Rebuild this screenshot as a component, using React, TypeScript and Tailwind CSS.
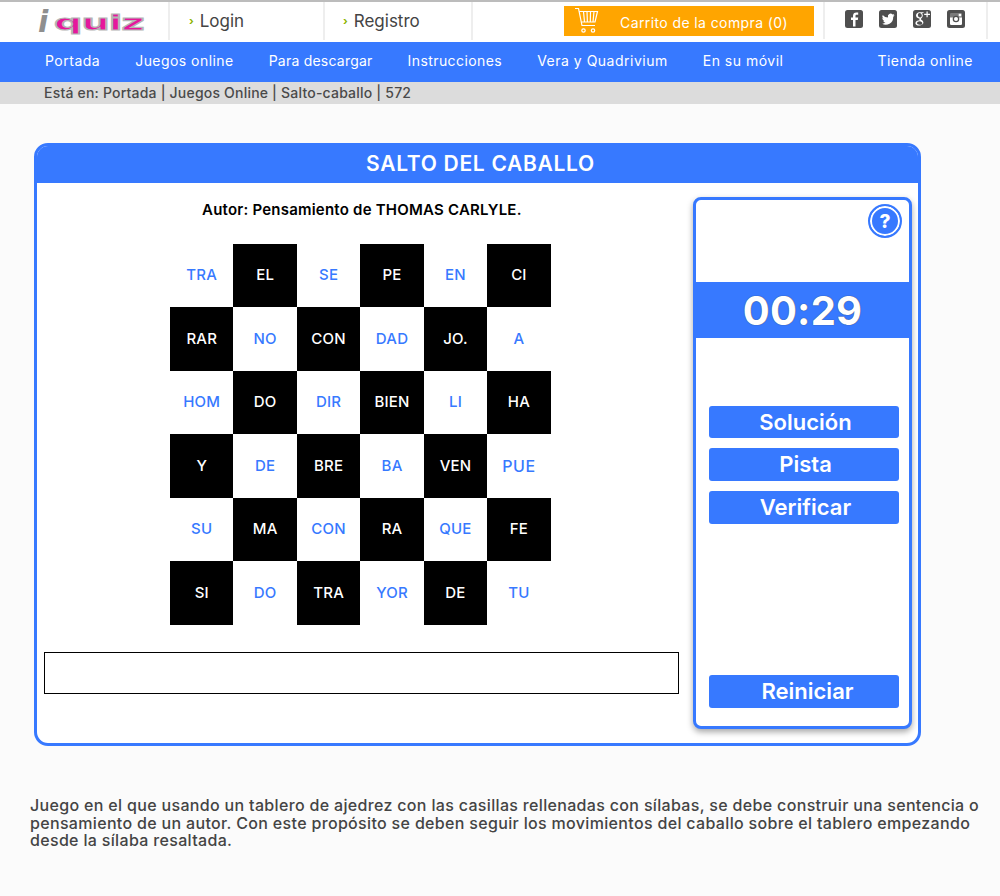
const rows = [
  ["TRA", "EL", "SE", "PE", "EN", "CI"],
  ["RAR", "NO", "CON", "DAD", "JO.", "A"],
  ["HOM", "DO", "DIR", "BIEN", "LI", "HA"],
  ["Y", "DE", "BRE", "BA", "VEN", "PUE"],
  ["SU", "MA", "CON", "RA", "QUE", "FE"],
  ["SI", "DO", "TRA", "YOR", "DE", "TU"],
];

const nav = [
  { label: "Portada", cls: "tracking-[0.5px]" },
  { label: "Juegos online", cls: "tracking-[0.45px]" },
  { label: "Para descargar", cls: "tracking-[0.22px]" },
  { label: "Instrucciones", cls: "tracking-[0.42px]" },
  { label: "Vera y Quadrivium", cls: "tracking-[0.5px]" },
  { label: "En su móvil", cls: "tracking-[0.5px]" },
];

function SocialF() {
  return (
    <svg width="18" height="18" viewBox="0 0 18 18">
      <rect width="18" height="18" rx="2.5" fill="#4f4f4f" />
      <path d="M10.500 16.500V10h2.300l.4-2.600h-2.700V6c0-.8.3-1.200 1.200-1.200h1.500V2.600c-.4 0-1.100-.1-1.900-.1-2 0-3.300 1.200-3.300 3.300v1.600H6V10h2v6.500z" fill="#fff" />
    </svg>
  );
}
function SocialT() {
  return (
    <svg width="18" height="18" viewBox="0 0 18 18">
      <rect width="18" height="18" rx="2.5" fill="#4f4f4f" />
      <path d="M15.500 5c-.5.2-1 .4-1.500.4.6-.3 1-.8 1.200-1.400-.5.3-1.100.5-1.700.6A2.600 2.600 0 0 0 9 7c0 .2 0 .4.100.6A7.400 7.400 0 0 1 3.700 4.900a2.600 2.600 0 0 0 .8 3.500c-.4 0-.8-.1-1.200-.3 0 1.300.9 2.300 2.100 2.600-.4.100-.8.100-1.200 0 .3 1 1.300 1.800 2.400 1.800A5.300 5.300 0 0 1 2.800 13.600 7.400 7.400 0 0 0 14.200 7c.5-.5 1-1.200 1.300-2z" fill="#fff" />
    </svg>
  );
}
function SocialG() {
  return (
    <svg width="18" height="18" viewBox="0 0 18 18">
      <rect width="18" height="18" rx="2.5" fill="#4f4f4f" />
      <path d="M6.800 2.200C4.500 2.200 3 3.800 3 5.600c0 1.600 1.200 2.800 3 2.800h.6c-.2.300-.3.600-.3.900 0 .4.200.7.500 1C4.400 10.300 2.400 11.400 2.400 13.200c0 1.500 1.800 2.400 3.800 2.400 2.400 0 4.200-1.400 4.200-3 0-2.300-2.500-2.600-2.500-3.600 0-.8 1.900-1.300 1.900-3.500 0-.9-.4-1.800-1.100-2.200h1.200l1-1.100zm.4 5.400c-1.300.1-2.200-1-2.300-2.300C4.800 4.100 5.400 3 6.600 3c1.200 0 2.100 1.200 2.200 2.300.1 1.200-.4 2.300-1.600 2.300zM6.600 14.800c-1.400 0-2.600-.6-2.600-1.700 0-1.100 1.300-1.900 2.600-1.900 1.600 0 2.700 1 2.700 2 0 1-.9 1.600-2.700 1.600z" fill="#fff" />
      <path d="M13.500 1.500v2.300h-2.300V5h2.300v2.300h1.200V5H17V3.800h-2.300V1.500z" fill="#fff" />
    </svg>
  );
}
function SocialI() {
  return (
    <svg width="18" height="18" viewBox="0 0 18 18">
      <rect width="18" height="18" rx="2.5" fill="#4f4f4f" />
      <rect x="3" y="3" width="12" height="12" rx="1.2" fill="#fff" />
      <rect x="3" y="3" width="12" height="4.500" fill="#4f4f4f" opacity="0.75" />
      <circle cx="9" cy="9" r="3.300" fill="#4f4f4f" />
      <circle cx="9" cy="9" r="2" fill="#fff" />
      <rect x="11.700" y="3.800" width="2.500" height="2.500" fill="#fff" />
    </svg>
  );
}

function Cart() {
  return (
    <svg width="26" height="28" viewBox="0 0 26 28" fill="none" stroke="#fff" strokeWidth="1.200">
      <path d="M1 1.500h3.500l3.500 17h13" />
      <path d="M5.200 4.500h18.300l-2.500 10.500H7.400" />
      <path d="M9.500 4.500l1 10.500M13 4.500l.4 10.500M16.500 4.500l-.2 10.500M20 4.500l-1 10.500" />
      <circle cx="9.500" cy="23.500" r="1.700" />
      <circle cx="19" cy="23.500" r="1.700" />
    </svg>
  );
}

function Logo() {
  return (
    <div className="flex items-end h-[26px] w-[108px] leading-none font-bold select-none">
      <span className="italic text-[30px] text-[#8f8f8f] w-[16px] leading-[26px] font-['DejaVu_Sans',sans-serif]">i</span>
      <span className="text-[22px] leading-[24px] text-[#e6179c] [-webkit-text-stroke:1.2px_#b5b5b5] [transform:scaleX(1.8)] origin-left font-['DejaVu_Sans',sans-serif] tracking-[-0.5px]">quiz</span>
    </div>
  );
}

function SideButton({ label, cls = "h-[33px] pl-[4px]" }: { label: string; cls?: string }) {
  return (
    <button className={`ml-[2px] pb-[1px] w-[190px] bg-[#3779ff] rounded-[3px] text-white text-[22px] font-semibold leading-none flex items-center justify-center ${cls}`}>
      {label}
    </button>
  );
}

export default function App() {
  return (
    <div className="w-[1000px] h-[896px] overflow-hidden bg-[#fbfbfb] font-['Inter',sans-serif] text-[#444]">
      <header className="h-[42px] bg-white border-t-2 border-[#bcbcbc] flex">
        <div className="w-[168px] flex items-center justify-center pl-[16px] pb-[1px]"><Logo /></div>
        <div className="w-[155px] h-[38px] border-l-2 border-[#eeeeee] flex items-center pl-[19px] pt-[1px] gap-[6px] text-[17px]">
          <span className="text-[#8cb400] text-[11px] font-bold">›</span>Login
        </div>
        <div className="w-[150px] h-[38px] border-x-2 border-[#eeeeee] flex items-center pl-[18px] pt-[1px] gap-[6px] text-[17px]">
          <span className="text-[#8cb400] text-[11px] font-bold">›</span>Registro
        </div>
        <div className="ml-[91px] mt-[4px] w-[250px] h-[30px] bg-[#ffa500] flex items-center text-white text-[14px] tracking-[0.4px]">
          <div className="pl-[10px] w-[56px]"><Cart /></div>
          <span className="pt-[3px]">Carrito de la compra (0)</span>
        </div>
        <div className="ml-[9px] w-[165px] h-[37px] border-x-2 border-[#eeeeee] flex items-start pt-[8px] pl-[20px] gap-[16px]">
          <SocialF />
          <SocialT />
          <SocialG />
          <SocialI />
        </div>
      </header>

      <nav className="h-[40px] pb-[3px] bg-[#3779ff] flex items-center pl-[45px] pr-[27px] text-white text-[14px] tracking-[0.5px]">
        <div className="flex gap-[35px]">
          {nav.map((n) => (
            <span key={n.label} className={n.cls}>{n.label}</span>
          ))}
        </div>
        <span className="ml-auto">Tienda online</span>
      </nav>

      <div className="h-[22px] pb-[1px] bg-[#dcdcdc] pl-[44px] flex items-center text-[14px] tracking-[0.2px] font-medium text-[#4a4a4a]">
        Está en: Portada | Juegos Online | Salto-caballo | 572
      </div>

      <main className="ml-[34px] mt-[39px] w-[887px] h-[603px] border-[3px] border-[#3779ff] rounded-[14px] bg-white flex flex-col overflow-hidden">
        <div className="h-[37px] shrink-0 pb-[2px] pl-[6px] bg-[#3779ff] text-white text-[21px] tracking-[0.7px] font-semibold flex items-center justify-center">
          SALTO DEL CABALLO
        </div>
        <div className="flex flex-1 min-h-0">
          <div className="w-[656px] shrink-0 flex flex-col">
            <div className="mt-[18px] h-[18px] pl-[165px] text-[15px] tracking-[0.22px] font-semibold text-black leading-[18px]">
              Autor: Pensamiento de THOMAS CARLYLE.
            </div>
            <div className="mt-[25px] ml-[133px] grid grid-cols-[repeat(6,63.45px)] grid-rows-[repeat(6,63.45px)] w-[381px] h-[381px]">
              {rows.flatMap((row, r) =>
                row.map((s, c) => {
                  const dark = (r + c) % 2 === 1;
                  return (
                    <div
                      key={`${r}-${c}`}
                      className={`flex items-center justify-center font-medium ${s === "PUE" ? "pb-[1px] text-[16px] tracking-[0.5px]" : "text-[15px] tracking-[0.2px]"} ${dark ? "bg-black text-white" : "bg-white text-[#3779ff]"}`}
                    >
                      {s}
                    </div>
                  );
                })
              )}
            </div>
            <div className="mt-[27px] ml-[7px] w-[635px] h-[42px] border border-black bg-white" />
          </div>
          <aside className="mt-[14px] w-[219px] h-[532px] border-[3px] border-[#3779ff] rounded-[8px] bg-white shadow-[0_3px_6px_rgba(0,0,0,0.35)] flex flex-col items-center">
            <div className="h-[82px] w-full shrink-0 flex justify-end items-start pt-[4px] pr-[7px]">
              <div className="w-[34px] h-[34px] rounded-full bg-[#3779ff] border-2 border-[#3779ff] flex items-center justify-center ring-2 ring-inset ring-white">
                <span className="text-white text-[19px] font-extrabold leading-none">?</span>
              </div>
            </div>
            <div className="h-[56px] w-full shrink-0 pt-[2px] bg-[#3779ff] text-white text-[40px] tracking-[0.2px] font-bold flex items-center justify-center leading-none [text-shadow:0_0_1px_#333]">
              00:29
            </div>
            <div className="mt-[68px] flex flex-col gap-[10px]">
              <SideButton label="Solución" cls="h-[32px] pl-[4px]" />
              <SideButton label="Pista" />
              <SideButton label="Verificar" />
            </div>
            <div className="mt-[151px]">
              <SideButton label="Reiniciar" cls="h-[33px] pl-[8px]" />
            </div>
          </aside>
        </div>
      </main>

      <p className="mt-[51px] ml-[30px] w-[965px] text-[16px] tracking-[0.33px] leading-[17.5px] text-[#444] font-medium">
        Juego en el que usando un tablero de ajedrez con las casillas rellenadas con sílabas, se debe construir una sentencia o pensamiento de un autor. Con este propósito se deben seguir los movimientos del caballo sobre el tablero empezando desde la sílaba resaltada.
      </p>
    </div>
  );
}
